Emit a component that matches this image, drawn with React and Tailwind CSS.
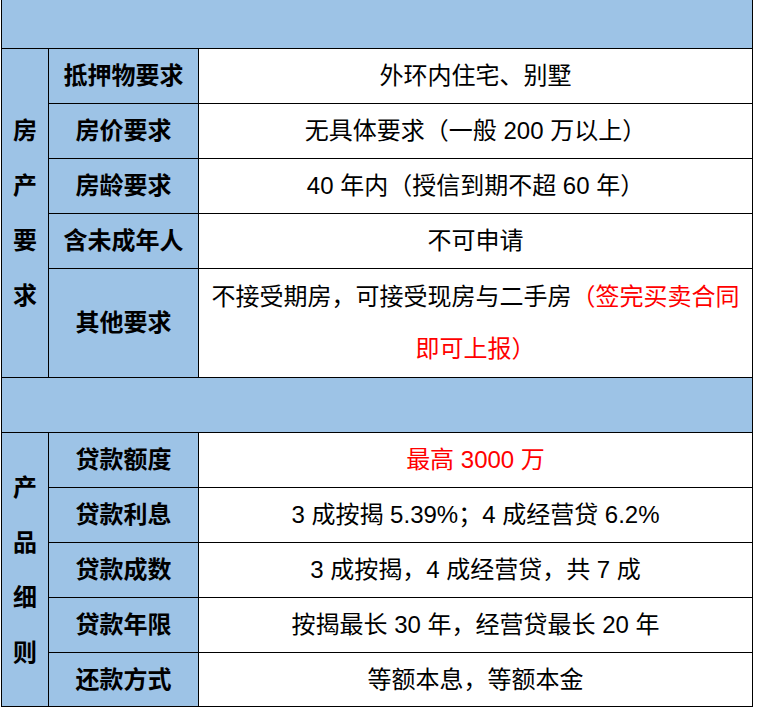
import React from "react";

const BLUE = "bg-[#9dc3e6]";

function Row({ label, children, last, h = "h-[55px]" }) {
  return (
    <div className={`flex ${h} ${last ? "" : "border-b border-black"}`}>
      <div className={`w-[150px] shrink-0 border-r border-black ${BLUE} flex items-center justify-center font-bold`}>
        {label}
      </div>
      <div className="flex-1 bg-white flex items-center justify-center text-center px-[8px]">
        {children}
      </div>
    </div>
  );
}

function VText({ chars }) {
  return (
    <div className={`w-[47px] shrink-0 border-r border-black ${BLUE} flex items-center justify-center font-bold`}>
      <div className="flex flex-col items-center leading-[55px]">
        {chars.split("").map((c, i) => (
          <span key={i}>{c}</span>
        ))}
      </div>
    </div>
  );
}

export default function App() {
  return (
    <div className="w-[757px] h-[711px] bg-white font-['Liberation_Sans','Noto_Sans_CJK_SC',sans-serif] text-[24px] text-black">
      <div className="ml-[1px] w-[752px] border-l border-r border-black">
        <div className={`h-[49px] ${BLUE} border-b border-black`}></div>

        <div className="flex border-b border-black">
          <VText chars="房产要求" />
          <div className="flex-1 flex flex-col">
            <Row label="抵押物要求">外环内住宅、别墅</Row>
            <Row label="房价要求">无具体要求（一般 200 万以上）</Row>
            <Row label="房龄要求">40 年内（授信到期不超 60 年）</Row>
            <Row label="含未成年人">不可申请</Row>
            <Row label="其他要求" last h="h-[108px]">
              <div className="flex flex-col items-center leading-[52px]">
                <div className="whitespace-nowrap">
                  <span>不接受期房，可接受现房与二手房</span>
                  <span className="text-[#ff0000]">（签完买卖合同</span>
                </div>
                <div className="text-[#ff0000]">即可上报）</div>
              </div>
            </Row>
          </div>
        </div>

        <div className={`h-[55px] ${BLUE} border-b border-black`}></div>

        <div className="flex border-b border-black">
          <VText chars="产品细则" />
          <div className="flex-1 flex flex-col">
            <Row label="贷款额度">
              <span className="text-[#ff0000]">最高 3000 万</span>
            </Row>
            <Row label="贷款利息">3 成按揭 5.39%；4 成经营贷 6.2%</Row>
            <Row label="贷款成数">3 成按揭，4 成经营贷，共 7 成</Row>
            <Row label="贷款年限">按揭最长 30 年，经营贷最长 20 年</Row>
            <Row label="还款方式" last h="h-[53px]">等额本息，等额本金</Row>
          </div>
        </div>
      </div>
    </div>
  );
}
